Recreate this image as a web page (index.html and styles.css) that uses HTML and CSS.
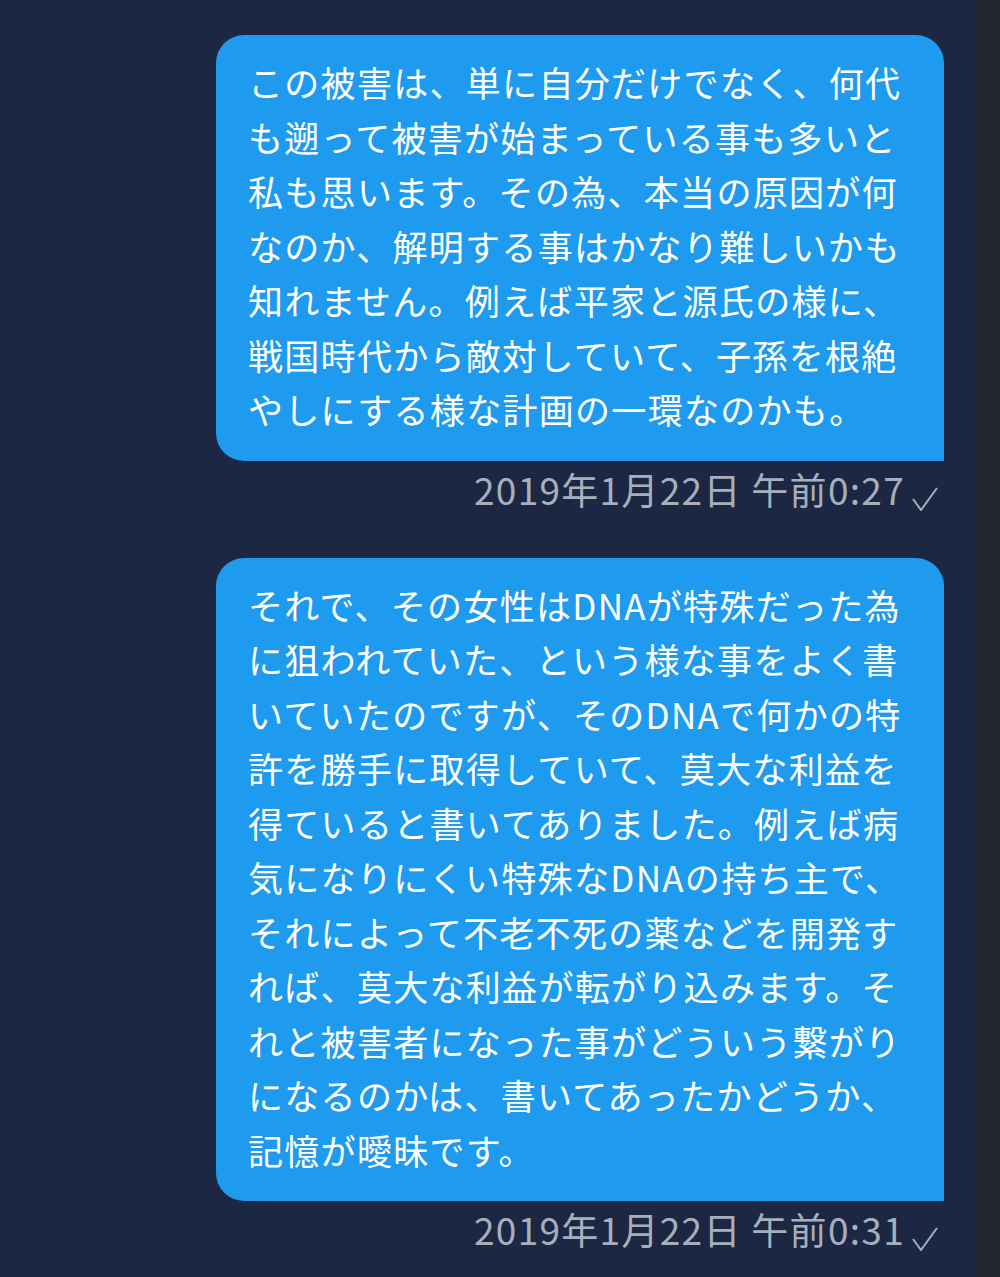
FILE: index.html
```html
<!DOCTYPE html>
<html lang="ja">
<head>
<meta charset="utf-8">
<link rel="stylesheet" href="styles.css">
</head>
<body>
<div class="app">
  <main class="chat">
    <div class="msg">
      <div class="bubble">この被害は、単に自分だけでなく、何代<br>も遡って被害が始まっている事も多いと<br>私も思います。その為、本当の原因が何<br>なのか、解明する事はかなり難しいかも<br>知れません。例えば平家と源氏の様に、<br>戦国時代から敵対していて、子孫を根絶<br>やしにする様な計画の一環なのかも。</div>
      <div class="meta"><span class="time">2019年1月22日 午前0:27</span><svg class="check" width="26" height="24" viewBox="0 0 26 24"><path d="M1 12 L9 23 L25 1" fill="none" stroke="#a7afbb" stroke-width="2"/></svg></div>
    </div>
    <div class="msg">
      <div class="bubble">それで、その女性はDNAが特殊だった為<br>に狙われていた、という様な事をよく書<br>いていたのですが、そのDNAで何かの特<br>許を勝手に取得していて、莫大な利益を<br>得ていると書いてありました。例えば病<br>気になりにくい特殊なDNAの持ち主で、<br>それによって不老不死の薬などを開発す<br>れば、莫大な利益が転がり込みます。そ<br>れと被害者になった事がどういう繋がり<br>になるのかは、書いてあったかどうか、<br>記憶が曖昧です。</div>
      <div class="meta"><span class="time">2019年1月22日 午前0:31</span><svg class="check" width="26" height="24" viewBox="0 0 26 24"><path d="M1 12 L9 23 L25 1" fill="none" stroke="#a7afbb" stroke-width="2"/></svg></div>
    </div>
  </main>
  <aside class="strip"></aside>
</div>
</body>
</html>
```

FILE: styles.css
```css
html, body {
  margin: 0;
  padding: 0;
  background: #1c2843;
}
.app {
  display: flex;
  width: 1000px;
  height: 1277px;
  overflow: hidden;
}
.chat {
  width: 976px;
  background: #1c2843;
  display: flex;
  flex-direction: column;
  align-items: flex-end;
  padding: 35px 32px 0 0;
  box-sizing: border-box;
  gap: 41px;
}
.strip {
  width: 24px;
  background: #22262e;
}
.msg {
  display: flex;
  flex-direction: column;
  align-items: flex-end;
}
.bubble {
  width: 728px;
  box-sizing: border-box;
  background: #1e9bee;
  color: #ffffff;
  border-radius: 28px 28px 0 28px;
  padding: 20px 10px 24px 32px;
  font-family: "Noto Sans CJK JP", "Noto Sans", sans-serif;
  font-size: 35px;
  line-height: 54.5px;
  letter-spacing: 1.3px;
  white-space: nowrap;
}
.meta {
  display: flex;
  align-items: center;
  gap: 7px;
  height: 56px;
  margin-right: 6px;
}
.time {
  font-family: "Noto Sans CJK JP", "Noto Sans", sans-serif;
  font-size: 37px;
  line-height: 54px;
  letter-spacing: 1.3px;
  color: #a7afbb;
}
.check {
  margin-top: 20px;
}
```
